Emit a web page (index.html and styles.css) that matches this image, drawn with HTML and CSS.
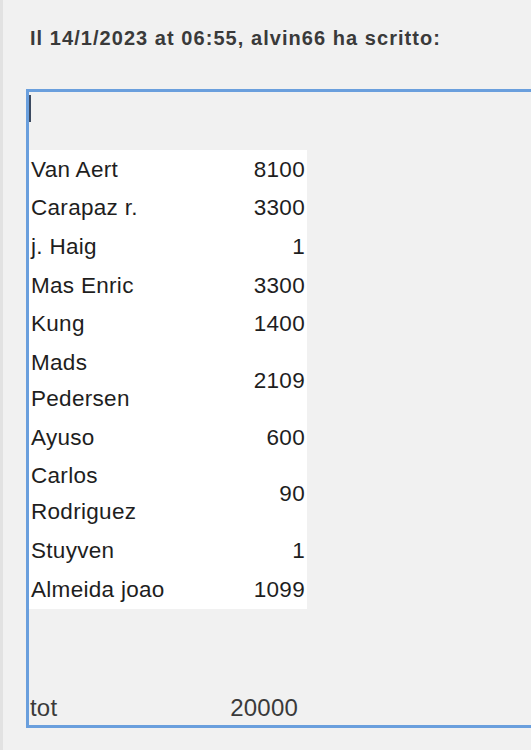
FILE: index.html
```html
<!DOCTYPE html>
<html lang="it">
<head>
  <meta charset="UTF-8">
  <title>Citazione</title>
  <link rel="stylesheet" href="styles.css">
</head>
<body>
  <div class="quote">
    <div class="quote-head">Il 14/1/2023 at 06:55, alvin66 ha scritto:</div>

    <div class="editor">
      <div class="caret"></div>

      <table class="riders">
        <tr><td class="name">Van Aert</td><td class="pts">8100</td></tr>
        <tr><td class="name">Carapaz r.</td><td class="pts">3300</td></tr>
        <tr><td class="name">j. Haig</td><td class="pts">1</td></tr>
        <tr><td class="name">Mas Enric</td><td class="pts">3300</td></tr>
        <tr><td class="name">Kung</td><td class="pts">1400</td></tr>
        <tr><td class="name">Mads Pedersen</td><td class="pts">2109</td></tr>
        <tr><td class="name">Ayuso</td><td class="pts">600</td></tr>
        <tr><td class="name">Carlos Rodriguez</td><td class="pts">90</td></tr>
        <tr><td class="name">Stuyven</td><td class="pts">1</td></tr>
        <tr><td class="name">Almeida joao</td><td class="pts">1099</td></tr>
      </table>

      <div class="total">
        <span>tot</span>
        <span>20000</span>
      </div>
    </div>
  </div>
</body>
</html>
```

FILE: styles.css
```css
html, body {
  margin: 0;
  padding: 0;
  height: 100%;
}
body {
  font-family: "Liberation Sans", Arial, sans-serif;
  background: #f1f1f1;
  overflow: hidden;
}
.quote {
  min-height: 100%;
  border-left: 3px solid #e2e2e2;
}
.quote-head {
  padding: 25px 0 0 27px;
  height: 64px;
  font-size: 20px;
  font-weight: bold;
  letter-spacing: 1.05px;
  color: #3a3a3a;
  line-height: 27px;
}
.editor {
  margin-left: 23px;
  height: 633px;
  border: 3px solid #6a9fdd;
  border-right: none;
}
.caret {
  width: 2px;
  height: 27px;
  margin-top: 3px;
  background: #3c4a60;
}
.riders {
  margin-top: 28px;
  border-collapse: collapse;
  background: #fff;
  width: 278px;
  font-size: 22.5px;
  letter-spacing: 0.3px;
  color: #1e1e1e;
}
.riders td {
  padding: 1.5px 2px 1.2px 2px;
  line-height: 36px;
  vertical-align: middle;
}
.riders .name {
  width: 140px;
}
.riders .pts {
  text-align: right;
}
.total {
  display: flex;
  justify-content: space-between;
  width: 268px;
  margin-top: 84px;
  padding-left: 1px;
  font-size: 24px;
  letter-spacing: 0.2px;
  line-height: 30px;
  color: #3a3a3a;
}
```
